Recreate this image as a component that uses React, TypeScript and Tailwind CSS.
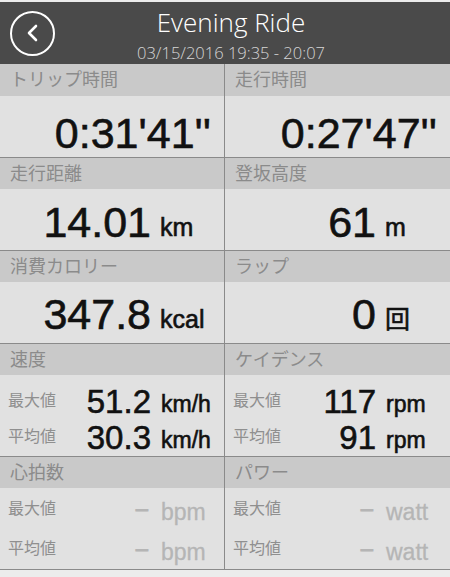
import React from 'react';

const sans = { fontFamily: '"Liberation Sans", "Noto Sans CJK JP", sans-serif' };

const Label = ({ text, h = 'h-[31px]' }: { text: string; h?: string }) => (
  <div className={`${h} bg-[#c9c9c9] flex items-center pl-[10px] text-[18px] text-[#8b8b8b] leading-none`}>
    {text}
  </div>
);

const num = 'text-[#111] leading-none [-webkit-text-stroke:0.6px_#111]';

const BigValue = ({ value, unit, pt }: { value: string; unit?: string; pt: string }) => (
  <div className={`h-[61px] bg-[#e1e1e1] flex items-start ${pt}`}>
    {unit ? (
      <>
        <div className={`w-[151px] text-right text-[43px] ${num}`}>{value}</div>
        <div className={`ml-[9px] mt-[14px] text-[25px] ${num} [-webkit-text-stroke:0.4px_#111]`}>{unit}</div>
      </>
    ) : (
      <div className={`w-full pr-[13px] text-right text-[43px] ${num}`}>{value}</div>
    )}
  </div>
);

const SubLine = ({ label, value, unit, muted, h }: { label: string; value: string; unit: string; muted?: boolean; h: string }) => (
  <div className={`${h} flex items-center`}>
    <div className="w-[151px] flex items-center justify-between pl-[8px]">
      <span className="text-[16px] leading-none text-[#8f8f8f]">{label}</span>
      {muted ? (
        <span className="text-[22px] leading-none text-[#b5b5b5] pr-[3px] [-webkit-text-stroke:0.8px_#b5b5b5]">–</span>
      ) : (
        <span className={`text-[33px] ${num}`}>{value}</span>
      )}
    </div>
    {muted ? (
      <span className="ml-[10px] mt-[6px] text-[23px] leading-none text-[#b5b5b5] [-webkit-text-stroke:0.3px_#b5b5b5]">{unit}</span>
    ) : (
      <span className={`ml-[10px] mt-[6px] text-[23px] ${num} [-webkit-text-stroke:0.4px_#111]`}>{unit}</span>
    )}
  </div>
);

const Section = ({ left, right }: { left: React.ReactNode; right: React.ReactNode }) => (
  <div className="flex border-b border-[#8a8a8a]">
    <div className="w-[225px] border-r border-[#8a8a8a] flex flex-col">{left}</div>
    <div className="flex-1 flex flex-col">{right}</div>
  </div>
);

export default function App() {
  return (
    <div className="w-[450px] h-[577px] bg-[#ececec] overflow-hidden pt-[2px]" style={sans}>
      {/* Header */}
      <div className="h-[62px] bg-[#4a4a4a] flex items-center px-[10px]">
        <button className="w-[45px] h-[45px] rounded-full border-2 border-white flex items-center justify-center">
          <svg width="16" height="18" viewBox="0 0 16 18" fill="none">
            <path d="M11 2 L4 9 L11 16" stroke="white" strokeWidth="2.6" strokeLinecap="round" strokeLinejoin="round" />
          </svg>
        </button>
        <div className="flex-1 flex flex-col items-center" style={{ fontFamily: '"Open Sans", "Liberation Sans", sans-serif' }}>
          <div className="text-[26px] leading-none font-light text-white mt-[4px]">Evening Ride</div>
          <div className="text-[16.5px] leading-none font-light text-[#d6d6d6] mt-[10px]">03/15/2016 19:35 - 20:07</div>
        </div>
        <div className="w-[33px]" />
      </div>

      <Section
        left={<><Label h="h-[32px]" text="トリップ時間" /><BigValue value={"0:31'41''"} pt="pt-[16px]" /></>}
        right={<><Label h="h-[32px]" text="走行時間" /><BigValue value={"0:27'47''"} pt="pt-[16px]" /></>}
      />
      <Section
        left={<><Label text="走行距離" /><BigValue value="14.01" unit="km" pt="pt-[12px]" /></>}
        right={<><Label text="登坂高度" /><BigValue value="61" unit="m" pt="pt-[12px]" /></>}
      />
      <Section
        left={<><Label text="消費カロリー" /><BigValue value="347.8" unit="kcal" pt="pt-[11px]" /></>}
        right={<><Label text="ラップ" /><BigValue value="0" unit="回" pt="pt-[11px]" /></>}
      />
      <Section
        left={
          <>
            <Label text="速度" />
            <div className="h-[81px] bg-[#e1e1e1] pt-[8px]">
              <SubLine h="h-[36px]" label="最大値" value="51.2" unit="km/h" />
              <SubLine h="h-[36px]" label="平均値" value="30.3" unit="km/h" />
            </div>
          </>
        }
        right={
          <>
            <Label text="ケイデンス" />
            <div className="h-[81px] bg-[#e1e1e1] pt-[8px]">
              <SubLine h="h-[36px]" label="最大値" value="117" unit="rpm" />
              <SubLine h="h-[36px]" label="平均値" value="91" unit="rpm" />
            </div>
          </>
        }
      />
      <Section
        left={
          <>
            <Label text="心拍数" />
            <div className="h-[81px] bg-[#e1e1e1] pt-[1px]">
              <SubLine h="h-[40px]" label="最大値" value="-" unit="bpm" muted />
              <SubLine h="h-[40px]" label="平均値" value="-" unit="bpm" muted />
            </div>
          </>
        }
        right={
          <>
            <Label text="パワー" />
            <div className="h-[81px] bg-[#e1e1e1] pt-[1px]">
              <SubLine h="h-[40px]" label="最大値" value="-" unit="watt" muted />
              <SubLine h="h-[40px]" label="平均値" value="-" unit="watt" muted />
            </div>
          </>
        }
      />
    </div>
  );
}
